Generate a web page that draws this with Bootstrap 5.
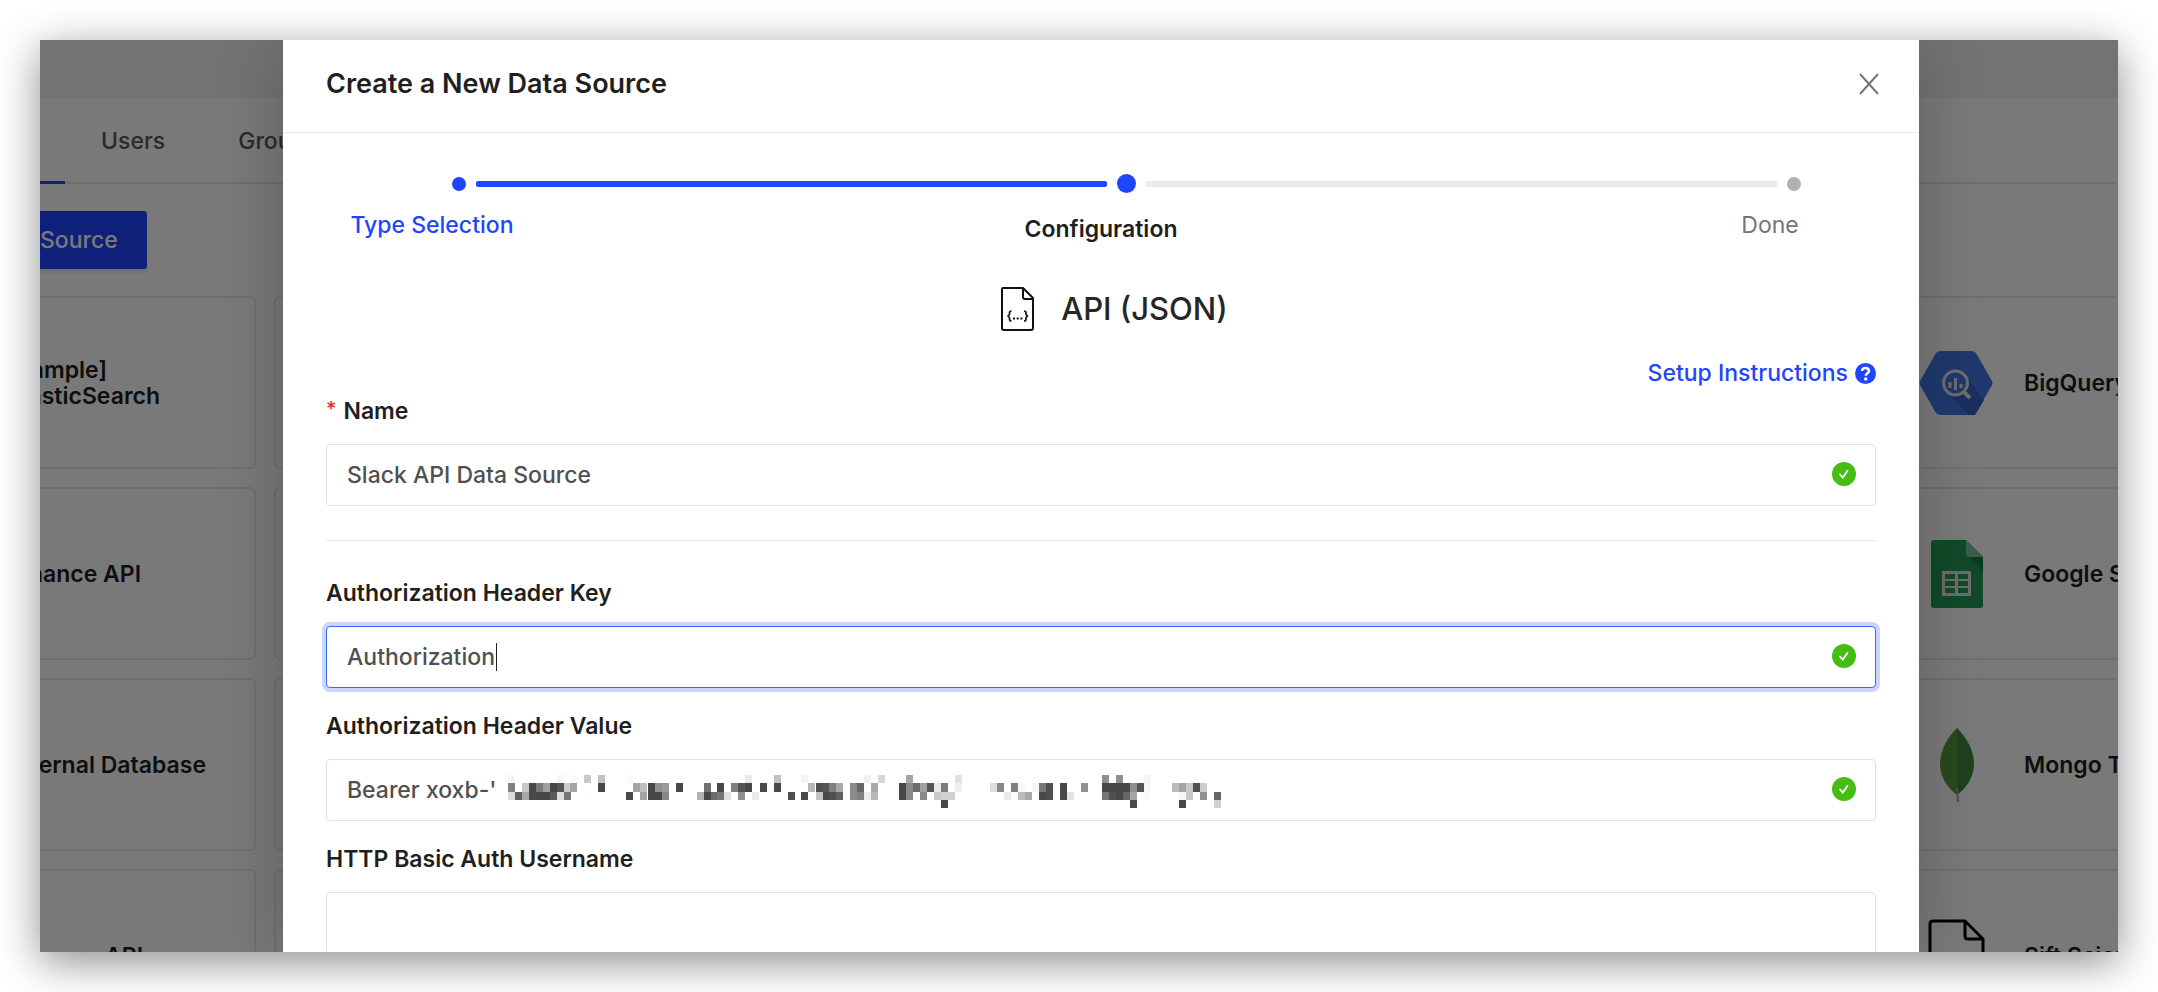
<!DOCTYPE html>
<html lang="en">
<head>
<meta charset="utf-8">
<meta name="viewport" content="width=device-width, initial-scale=1">
<title>Create a New Data Source</title>
<link href="https://cdn.jsdelivr.net/npm/bootstrap@5.3.0/dist/css/bootstrap.min.css" rel="stylesheet">
<style>
  :root { --brand: #1f45ff; --line: #e0e0e0; }
  body { font-family: Inter, "Liberation Sans", sans-serif; font-size: 23px; line-height: 32px; color: #1f1f1f; background: #fff; }
  .window-frame { margin: 40px; min-height: 0; background: #fff; box-shadow: 0 10px 40px rgba(0,0,0,.45); }
  .top-strip { height: 58px; background: #f0f3f6; }
  .tab-row { height: 86px; border-bottom: 2px solid #e8e8e8; }
  .tab-row a { color: #595959; text-decoration: none; line-height: 86px; font-weight: 500; }
  .tab-row .tab-current { width: 25px; border-bottom: 3px solid var(--brand); margin-bottom: -2px; margin-right: 36px; }
  .tab-row .tab-users { margin-right: 73px; }
  .btn-source { height: 58px; margin: 27px 0; padding: 0 29px 0 0; border: 0; border-radius: 0 3px 3px 0; background: var(--brand); color: #fff; font-size: 23px; font-weight: 500; box-shadow: 0 4px 0 rgba(0,0,0,.05); }
  .catalog { display: grid; grid-template-columns: repeat(6, 1fr); gap: 18px; margin: 0 -153px 0 -169px; }
  .source-tile { height: 173px; padding-left: 31px; border: 2px solid #e6e9ec; border-radius: 6px; font-weight: 600; line-height: 26px; white-space: nowrap; }
  .source-tile svg { flex: none; width: 74px; height: 74px; }
  .source-tile .tile-name { margin-left: 31px; }
  .source-tile .tile-end { width: var(--end); text-align: right; }
  .source-tile .tile-short { padding-right: 53px; }
  .mask { inset: 0; background: rgba(0,0,0,.525); padding: 0 199px 0 243px; }
  .dialog-panel { background: #fff; box-shadow: 0 7px 60px rgba(0,0,0,.22); }
  .dialog-head { height: 93px; padding: 0 40px 4px 43px; border-bottom: 1px solid #e8e8e8; }
  .dialog-head h1 { font-size: 27px; font-weight: 600; margin: 0; }
  .btn-dismiss { background: none; border: 0; padding: 0; line-height: 0; }
  .step-track { padding: 34px 118px 0 169px; height: 67px; gap: 10px; }
  .step-track .dot { width: 14px; height: 14px; border-radius: 50%; background: #b0b0b0; }
  .step-track .dot.past, .step-track .dot.now { background: var(--brand); }
  .step-track .dot.now { width: 19px; height: 19px; }
  .step-track .bar { height: 6px; border-radius: 2px; background: #ebebeb; }
  .step-track .bar.past { background: var(--brand); }
  .step-labels { padding: 0 29px; margin-top: 9px; }
  .step-labels > * { width: 240px; text-align: center; }
  .step-labels a, .help-link { color: var(--brand); text-decoration: none; font-weight: 500; }
  .step-labels .now { font-weight: 600; padding-top: 4px; }
  .step-labels .later { color: #757575; }
  .type-title { margin: 36px 0 20px; padding-left: 26px; gap: 25px; height: 56px; }
  .type-title h2 { font-size: 31px; font-weight: 500; margin: 0; color: #262626; }
  .dialog-content { padding: 0 43px; }
  .help-link { gap: 7px; }
  .field { margin-top: 22px; }
  .field.first { margin-top: 6px; }
  .field label { font-weight: 600; display: block; margin-bottom: 17px; }
  .field .star { color: #f5222d; font-size: 20px; margin-right: 7px; line-height: 20px; vertical-align: 3px; font-weight: 500; }
  .field .form-control { height: 62px; padding: 0 20px; font-size: 23px; font-weight: 500; color: #505050; border: 1px solid var(--line); border-radius: 4px; }
  .field .form-control.active-field { border-color: #3d68ff; box-shadow: 0 0 0 4px #cbd6ff; }
  .field .ok-mark { position: absolute; right: 20px; top: 18px; }
  .field .caret { position: absolute; left: 170px; top: 17px; width: 1px; height: 28px; background: #222; }
  .field .redaction { position: absolute; left: 182px; top: 16px; }
  .divider { height: 1px; background: #e8e8e8; margin: 34px 0 36px; }
</style>
<script src="https://cdn.jsdelivr.net/npm/bootstrap@5.3.0/dist/js/bootstrap.bundle.min.js"></script>
</head>
<body class="vh-100 d-flex flex-column overflow-hidden">
<svg class="d-none">
  <symbol id="ok" viewBox="0 0 24 24"><circle cx="12" cy="12" r="12" fill="#47bd14"/><path d="M7.6 12l3.1 3.600 5.200-7.400" fill="none" stroke="#fff" stroke-width="1.700"/></symbol>
</svg>
<div class="window-frame position-relative flex-fill">
  <div class="h-100 overflow-hidden">
    <div class="top-strip"></div>
    <nav class="tab-row d-flex">
      <span class="tab-current"></span>
      <a class="tab-users" href="#">Users</a>
      <a href="#">Groups</a>
    </nav>
    <button class="btn-source d-block" type="button">Source</button>
    <div class="catalog">
      <div class="source-tile d-flex align-items-center"><div class="tile-end" style="--end:256px"><span class="tile-short">[Sample]</span><br>ElasticSearch</div></div>
      <div class="source-tile"></div><div class="source-tile"></div><div class="source-tile"></div><div class="source-tile"></div>
      <div class="source-tile d-flex align-items-center">
        <svg viewBox="0 0 74 74"><path d="M17 7Q19 5 22 5H52Q55 5 57 7L73 35Q74 37 73 39L57 67Q55 69 52 69H22Q19 69 17 67L1 39Q0 37 1 35Z" fill="#4379e8" /><path d="M46 28L65 54 56 69H50L28 46Z" fill="#3666c4"/><circle cx="36.500" cy="37" r="12" fill="#4379e8" stroke="#e6e6e6" stroke-width="3"/><path d="M45 46l6 6" stroke="#e6e6e6" stroke-width="4"/><path d="M31 36v6M36.500 32v12M42 38v4" stroke="#e6e6e6" stroke-width="3"/></svg>
        <span class="tile-name">BigQuery</span>
      </div>

      <div class="source-tile d-flex align-items-center"><div class="tile-end" style="--end:237px">Binance API</div></div>
      <div class="source-tile"></div><div class="source-tile"></div><div class="source-tile"></div><div class="source-tile"></div>
      <div class="source-tile d-flex align-items-center">
        <svg viewBox="0 0 74 74"><path d="M15 3H47L64 20V68Q64 71 61 71H15Q12 71 12 68V6Q12 3 15 3Z" fill="#239c57"/><path d="M47 3L64 20H50Q47 20 47 17Z" fill="#80c79f"/><path d="M50 20H64V34Z" fill="#1b8147"/><path fill="#e6e6e6" fill-rule="evenodd" d="M23 34H52V59H23ZM26 37V42H36V37ZM39 37V42H49V37ZM26 44V49H36V44ZM39 44V49H49V44ZM26 51V56H36V51ZM39 51V56H49V51Z"/></svg>
        <span class="tile-name">Google Sheets</span>
      </div>

      <div class="source-tile d-flex align-items-center"><div class="tile-end" style="--end:302px">External Database</div></div>
      <div class="source-tile"></div><div class="source-tile"></div><div class="source-tile"></div><div class="source-tile"></div>
      <div class="source-tile d-flex align-items-center">
        <svg viewBox="0 0 74 74"><path d="M38 0Q22 16 21 35 21 54 38 67Z" fill="#549a3c"/><path d="M38 0Q54 16 55 35 55 54 38 67Z" fill="#40893c"/><path d="M38 60l2 14h-2z" fill="#b9a893" stroke="#b9a893"/></svg>
        <span class="tile-name">Mongo Test</span>
      </div>

      <div class="source-tile d-flex align-items-center"><div class="tile-end" style="--end:239px">API</div></div>
      <div class="source-tile"></div><div class="source-tile"></div><div class="source-tile"></div><div class="source-tile"></div>
      <div class="source-tile d-flex align-items-center">
        <svg viewBox="0 0 74 74" fill="none" stroke="#000" stroke-width="3" stroke-linejoin="round"><path d="M14 2H46L64 20V72H11V5Q11 2 14 2ZM46 2V17Q46 20 49 20H64"/></svg>
        <span class="tile-name">Sift Science</span>
      </div>
    </div>
  </div>

  <div class="mask position-absolute overflow-hidden">
    <section class="dialog-panel h-100 overflow-hidden" role="dialog" aria-labelledby="dialog-title">
      <header class="dialog-head d-flex align-items-center justify-content-between">
        <h1 id="dialog-title">Create a New Data Source</h1>
        <button class="btn-dismiss" type="button" aria-label="Close"><svg width="20" height="22" viewBox="0 0 20 22"><path d="M1 1l18 20M19 1L1 21" stroke="#757575" stroke-width="2"/></svg></button>
      </header>
      <div class="step-track d-flex align-items-center">
        <span class="dot past"></span><span class="bar past flex-fill"></span><span class="dot now"></span><span class="bar flex-fill"></span><span class="dot"></span>
      </div>
      <div class="step-labels d-flex justify-content-between">
        <a href="#">Type Selection</a><span class="now">Configuration</span><span class="later">Done</span>
      </div>
      <div class="type-title d-flex align-items-center justify-content-center">
        <svg width="36" height="44" viewBox="0 0 36 44" fill="none" stroke="#111" stroke-width="2" stroke-linejoin="round"><path d="M3 1H23L33 11V41Q33 43 31 43H4Q2 43 2 41V2Q2 1 3 1ZM23 1V10Q23 12 25 12H33"/><path d="M11.500 24Q9.500 24 9.500 26V27.500L8 29l1.500 1.500V32Q9.500 34 11.500 34M24 24Q26 24 26 26V27.500L27.500 29 26 30.500V32Q26 34 24 34" stroke-width="1.700"/><path d="M13 31.500h2m1.700 0h2m1.700 0h2"/></svg>
        <h2>API (JSON)</h2>
      </div>
      <form class="dialog-content">
        <div class="d-flex justify-content-end">
          <a class="help-link d-flex align-items-center" href="#">Setup Instructions
            <svg width="21" height="21" viewBox="0 0 21 21"><circle cx="10.500" cy="10.500" r="10.500" fill="#1f45ff"/><path d="M7 8Q7.300 5 10.500 5t3.500 3c0 2.300-3.200 2.400-3.200 4.800" fill="none" stroke="#fff" stroke-width="2.500"/><circle cx="10.700" cy="16" r="1.700" fill="#fff"/></svg>
          </a>
        </div>
        <div class="field first">
          <label for="ds-name"><span class="star">*</span>Name</label>
          <div class="position-relative"><input id="ds-name" class="form-control" type="text" value="Slack API Data Source"><svg class="ok-mark" width="24" height="24"><use href="#ok"/></svg></div>
        </div>
        <div class="divider"></div>
        <div class="field">
          <label for="ds-key">Authorization Header Key</label>
          <div class="position-relative"><input id="ds-key" class="form-control active-field" type="text" value="Authorization"><span class="caret"></span><svg class="ok-mark" width="24" height="24"><use href="#ok"/></svg></div>
        </div>
        <div class="field">
          <label for="ds-value">Authorization Header Value</label>
          <div class="position-relative"><input id="ds-value" class="form-control" type="text" value="Bearer xoxb-'"><svg id="redaction" class="redaction" width="713" height="33" viewBox="144 75 2139 100" preserveAspectRatio="none" shape-rendering="crispEdges"></svg><svg class="ok-mark" width="24" height="24"><use href="#ok"/></svg></div>
        </div>
        <div class="field">
          <label for="ds-user">HTTP Basic Auth Username</label>
          <input id="ds-user" class="form-control" type="text">
        </div>
      </form>
    </section>
  </div>
</div>
<script>
  // Pixelated token: one string per row, each cell is "x:grey" with an optional ":width"
  const rows = [
    '144:f5 291:f5 330:fa 372:c8 414:c0 498:fb 855:ea 942:c0 1023:f5 1212:f0 1254:d8 1338:a5 1485:e2 1926:90 1968:90 2052:f6',
    '144:80 186:c8 207:48 228:7a 249:a0 270:48 291:55 312:cc 330:a5 414:48 519:a5 540:c0 564:48 585:90 606:99 648:48 732:70 771:48 813:80 834:55 855:48 900:48 921:fa 942:48 1044:b8 1068:50 1086:55 1107:80 1128:a8 1170:8a 1191:66 1233:a8 1317:48 1338:8a 1359:6c 1380:a0 1401:55 1422:e8 1443:7c 1485:ee 1590:dc 1611:88 1653:80 1674:f7 1716:f5 1737:78 1758:50 1800:48 1863:90 1926:48:84 2010:90 2031:55 2052:f8 2136:bb 2157:a5 2178:c8 2199:50 2220:cc',
    '144:dd 165:60 186:a8 207:48:63 270:5a 291:e0 312:78 372:fd 498:48 540:a5 564:48:42 606:88 711:b0 732:48 753:6a 771:76 792:e0 834:90 876:ea 984:50 1023:48 1068:c4 1089:48 1107:50 1128:60 1170:8a 1191:80 1212:ee 1233:b8 1317:48 1338:8a 1380:8a 1422:c8 1443:d0:42 1632:ea 1674:bb 1695:a8 1737:48 1758:50 1800:48 1821:e4 1926:76 1947:50 1968:48 1989:66 2010:a5 2052:fa 2157:f6 2178:c8 2220:92 2262:66',
    '1443:48 2010:48 2157:48 2262:d0'
  ];
  document.getElementById('redaction').innerHTML = rows.map((row, i) => row.split(' ').map(cell => {
    const [x, g, w = 21] = cell.split(':');
    return `<rect x="${x}" y="${75 + i * 25}" width="${w}" height="25" fill="#${g}${g}${g}"/>`;
  }).join('')).join('');
</script>
</body>
</html>
